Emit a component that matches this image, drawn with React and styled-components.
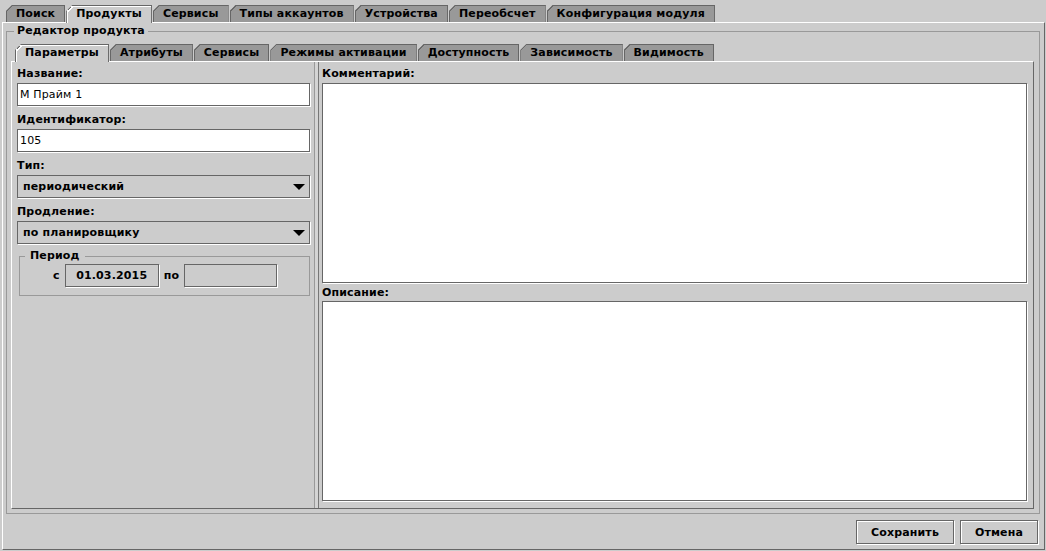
import React from "react";
import styled, { createGlobalStyle, css } from "styled-components";

const GlobalStyle = createGlobalStyle`
  html, body { margin: 0; padding: 0; background: #cccccc; }
  body { font-family: "DejaVu Sans", "Liberation Sans", sans-serif; font-size: 11px; color: #000; }
  * { box-sizing: border-box; }
`;

const FONT = `"DejaVu Sans", "Liberation Sans", sans-serif`;
const SIZE = "11px";

const Window = styled.div`
  width: 1046px;
  height: 551px;
  display: flex;
  flex-direction: column;
  padding: 5px 1px 1px 2px;
  background: #cccccc;
  font: bold ${SIZE} ${FONT};
  letter-spacing: 0.15px;
  color: #000;
`;

const TabStrip = styled.div`
  display: flex;
  align-items: flex-end;
  height: 17px;
  padding-left: 4px;
  position: relative;
  z-index: 1;
  flex: none;
`;

const cornerLine = (hl) => css`
  background:
    linear-gradient(
        to bottom right,
        transparent calc(50% - 0.8px),
        #666666 calc(50% - 0.8px),
        #666666 calc(50% + 0.6px),
        ${hl} calc(50% + 0.6px),
        ${hl} calc(50% + 1.8px),
        transparent calc(50% + 1.8px)
      )
      0 0 / 7px 7px no-repeat border-box,
    ${(p) => (p.$active ? "#cccccc" : "#999999")};
`;

const Tab = styled.div`
  height: ${(p) => (p.$active ? 18 : 17)}px;
  margin-bottom: ${(p) => (p.$active ? -1 : 0)}px;
  margin-right: 1px;
  padding: 0 9px 0 9px;
  line-height: 15px;
  border: 1px solid #666666;
  border-bottom: none;
  white-space: nowrap;
  clip-path: polygon(6px 0, 100% 0, 100% 100%, 0 100%, 0 6px);
  ${(p) => cornerLine(p.$active ? "#ffffff" : "transparent")}
  box-shadow: ${(p) => (p.$active ? "inset 1px 1px 0 #ffffff" : "none")};
`;

const Pane = styled.div`
  flex: 1;
  min-height: 0;
  display: flex;
  flex-direction: column;
  border-top: 1px solid #ffffff;
  border-left: 1px solid #ffffff;
  border-right: 1px solid #666666;
  border-bottom: 1px solid #666666;
`;

const Group = styled.fieldset`
  flex: 1;
  min-height: 0;
  min-width: 0;
  margin: 0 4px 0 3px;
  padding: 0 5px 4px 4px;
  border: 1px solid #999999;
  display: flex;
  flex-direction: column;
`;

const GroupTitle = styled.legend`
  font: bold ${SIZE} ${FONT};
  letter-spacing: 0.15px;
  line-height: 16px;
  margin-left: 3px;
  padding: 0 3px;
`;

const InnerTabs = styled.div`
  flex: 1;
  min-height: 0;
  display: flex;
  flex-direction: column;
  margin-top: 5px;
`;

const InnerContent = styled.div`
  flex: 1;
  min-height: 0;
  display: flex;
  border-top: 1px solid #ffffff;
  border-left: 1px solid #ffffff;
  border-right: 1px solid #666666;
  border-bottom: 1px solid #666666;
`;

const LeftPanel = styled.div`
  width: 302px;
  flex: none;
  display: flex;
  flex-direction: column;
  padding: 0 4px 0 5px;
`;

const Divider = styled.div`
  width: 5px;
  flex: none;
  border-left: 1px solid #999999;
  border-right: 1px solid #777777;
  background: #d4d4d4;
`;

const RightPanel = styled.div`
  flex: 1;
  min-width: 0;
  display: flex;
  flex-direction: column;
  padding: 0 6px 7px 3px;
`;

const Label = styled.div`
  height: ${(p) => p.$h ?? 21}px;
  padding-top: ${(p) => p.$pt ?? 3}px;
  line-height: ${(p) => (p.$h ?? 21) - (p.$pt ?? 3)}px;
  margin-top: ${(p) => p.$mt ?? 0}px;
  white-space: nowrap;
  flex: none;
`;

const flush3d = css`
  border: 1px solid #666666;
  box-shadow: 1px 1px 0 #ffffff;
`;

const Field = styled.input`
  ${flush3d};
  font: ${SIZE} ${FONT};
  letter-spacing: 0.15px;
  height: 23px;
  width: 100%;
  margin: 0 0 2px 0;
  padding: 0 2px;
  background: #ffffff;
  color: #000;
  outline: none;
  flex: none;
`;

const Combo = styled.div`
  ${flush3d};
  height: 23px;
  margin-bottom: 2px;
  display: flex;
  align-items: center;
  justify-content: space-between;
  padding: 0 4px 0 5px;
  background: #cccccc;
  flex: none;
`;

const Period = styled.fieldset`
  margin: 3px 0 0 2px;
  padding: 1px 0 8px 0;
  border: 1px solid #999999;
  min-width: 0;
`;

const PeriodTitle = styled.legend`
  font: bold ${SIZE} ${FONT};
  letter-spacing: 0.15px;
  line-height: 14px;
  margin-left: 5px;
  padding: 0 5px;
`;

const PeriodRow = styled.div`
  display: flex;
  align-items: center;
  gap: 4px;
  padding-left: 33px;
`;

const DateBox = styled.div`
  ${flush3d};
  width: ${(p) => p.$w}px;
  height: 23px;
  margin: 0 1px;
  display: flex;
  align-items: center;
  justify-content: center;
  background: #cccccc;
`;

const TextArea = styled.textarea`
  ${flush3d};
  font: ${SIZE} ${FONT};
  flex: 1;
  min-height: 0;
  width: 100%;
  resize: none;
  background: #ffffff;
  outline: none;
  display: block;
`;

const ButtonBar = styled.div`
  display: flex;
  justify-content: flex-end;
  gap: 6px;
  padding: 6px 6px 5px 0;
  flex: none;
`;

const Button = styled.button`
  ${flush3d};
  font: bold ${SIZE} ${FONT};
  letter-spacing: 0.15px;
  height: 24px;
  width: ${(p) => p.$w}px;
  padding: 0;
  background: #cccccc;
  box-shadow: inset 1px 1px 0 #ffffff, 1px 1px 0 #ffffff;
  color: #000;
`;

const Arrow = () => (
  <svg width="12" height="6" viewBox="0 0 12 6">
    <polygon points="0,0 12,0 6,6" fill="#000" />
  </svg>
);

const topTabs = ["Поиск", "Продукты", "Сервисы", "Типы аккаунтов", "Устройства", "Переобсчет", "Конфигурация модуля"];
const innerTabs = ["Параметры", "Атрибуты", "Сервисы", "Режимы активации", "Доступность", "Зависимость", "Видимость"];

export default function App() {
  return (
    <>
      <GlobalStyle />
      <Window>
        <TabStrip>
          {topTabs.map((t, i) => (
            <Tab key={t} $active={i === 1}>
              {t}
            </Tab>
          ))}
        </TabStrip>
        <Pane>
          <Group>
            <GroupTitle>Редактор продукта</GroupTitle>
            <InnerTabs>
              <TabStrip>
                {innerTabs.map((t, i) => (
                  <Tab key={t} $active={i === 0}>
                    {t}
                  </Tab>
                ))}
              </TabStrip>
              <InnerContent>
                <LeftPanel>
                  <Label>Название:</Label>
                  <Field defaultValue="М Прайм 1" />
                  <Label>Идентификатор:</Label>
                  <Field defaultValue="105" />
                  <Label>Тип:</Label>
                  <Combo>
                    <span>периодический</span>
                    <Arrow />
                  </Combo>
                  <Label>Продление:</Label>
                  <Combo>
                    <span>по планировщику</span>
                    <Arrow />
                  </Combo>
                  <Period>
                    <PeriodTitle>Период</PeriodTitle>
                    <PeriodRow>
                      <span>с</span>
                      <DateBox $w={94}>01.03.2015</DateBox>
                      <span>по</span>
                      <DateBox $w={93} />
                    </PeriodRow>
                  </Period>
                </LeftPanel>
                <Divider />
                <RightPanel>
                  <Label>Комментарий:</Label>
                  <TextArea />
                  <Label $h={17} $pt={1} $mt={1}>Описание:</Label>
                  <TextArea />
                </RightPanel>
              </InnerContent>
            </InnerTabs>
          </Group>
          <ButtonBar>
            <Button $w={98}>Сохранить</Button>
            <Button $w={78}>Отмена</Button>
          </ButtonBar>
        </Pane>
      </Window>
    </>
  );
}
